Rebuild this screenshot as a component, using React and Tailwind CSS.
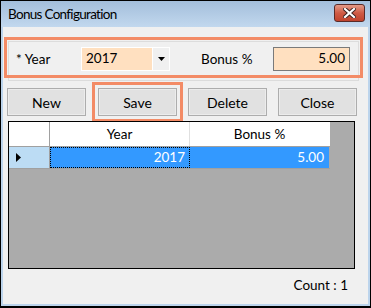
import React from 'react'

const font = { fontFamily: 'Lato, "Open Sans", sans-serif' }

function Btn({ children, hl }) {
  const btn = (
    <div className="w-[79px] h-[28px] border border-[#adadad] bg-[#e1e1e1] flex items-center justify-center text-[14px] text-black shadow-[inset_0_0_0_1px_#ececec]">
      {children}
    </div>
  )
  if (!hl) return btn
  return <div className="border-[3px] border-[#f38b66] p-[3px] -m-[6px]">{btn}</div>
}

export default function App() {
  return (
    <div className="w-[371px] h-[308px] bg-black p-[1px] pb-[2px]" style={font}>
      <div className="w-full h-full bg-[#bcd4ec] flex flex-col px-[2px] pb-[2px]">
        {/* title bar */}
        <div className="h-[26px] shrink-0 -mx-[2px] px-[7px] flex items-center justify-between bg-gradient-to-b from-[#a3bedb] to-[#c2d8ee]">
          <span className="text-[13.5px] tracking-[-0.7px] text-black">Bonus Configuration</span>
          <div className="w-[31px] h-[18px] mt-[-2px] mr-[-2px] rounded-[3px] border border-[#5a2b28] bg-gradient-to-b from-[#e39a88] via-[#cf5b45] to-[#c0432d] flex items-center justify-center">
            <svg width="13" height="10" viewBox="0 0 13 10">
              <path d="M2 1 L11 9 M11 1 L2 9" stroke="#3b2220" strokeWidth="4" strokeLinecap="square" />
              <path d="M2 1 L11 9 M11 1 L2 9" stroke="#fff" strokeWidth="2.2" strokeLinecap="square" />
            </svg>
          </div>
        </div>

        {/* client */}
        <div className="flex-1 bg-[#f0f0f0] flex flex-col text-[13.5px] text-black">
          <div className="relative mt-[10px] ml-[1px] w-[359px] h-[41px]">
            <div className="absolute left-[4px] right-[4px] top-[4px] h-[40px] border border-[#dcdcdc]" />
            <div className="relative h-full border-[3px] border-[#f38b66] flex items-center">
              <span className="ml-[9px] w-[65px] mt-[4px]">* Year</span>
              <div className="flex h-[24px] w-[89px] border border-white mt-[2px]">
                <div className="flex-1 bg-[#ffe0c0] pl-[4px] flex items-center">2017</div>
                <div className="w-[17px] border-l border-white flex items-center justify-center">
                  <svg width="7" height="4" viewBox="0 0 7 4"><path d="M0 0 H7 L3.5 4 Z" fill="#000" /></svg>
                </div>
              </div>
              <span className="ml-[31px] w-[72px] mt-[4px]">Bonus %</span>
              <div className="w-[77px] h-[24px] mt-[2px] border border-[#7a7a7a] bg-[#ffe0c0] flex items-center justify-end pr-[4px]">
                5.00
              </div>
            </div>
          </div>

          <div className="flex gap-[11px] ml-[4px] mt-[10px]">
            <Btn>New</Btn>
            <div className="ml-[1px]"><Btn hl>Save</Btn></div>
            <Btn>Delete</Btn>
            <Btn>Close</Btn>
          </div>

          {/* grid */}
          <div className="ml-[5px] mt-[5px] w-[347px] h-[148px] border border-black bg-[#ababab] flex flex-col">
            <div className="flex h-[25px] w-[321px] bg-white border-b border-[#a0a0a0]">
              <div className="w-[41px] border-r border-[#a0a0a0]" />
              <div className="w-[140px] border-r border-[#e0e0e0] flex items-center justify-center">Year</div>
              <div className="w-[139px] flex items-center justify-center">Bonus %</div>
            </div>
            <div className="flex h-[22px] w-[321px] border-b border-[#a0a0a0]">
              <div className="w-[41px] bg-[#bcdcf4] border-r border-[#a0a0a0] flex items-center pl-[7px]">
                <svg width="5" height="9" viewBox="0 0 5 9"><path d="M0 0 L5 4.5 L0 9 Z" fill="#000" /></svg>
              </div>
              <div className="w-[140px] bg-[#3399ff] text-white border border-dotted border-black flex items-center justify-end pr-[4px]">2017</div>
              <div className="w-[139px] bg-[#3399ff] text-white flex items-center justify-end pr-[5px]">5.00</div>
            </div>
          </div>

          <div className="flex justify-end pr-[20px] mt-[6px]">Count : 1</div>
        </div>
      </div>
    </div>
  )
}
